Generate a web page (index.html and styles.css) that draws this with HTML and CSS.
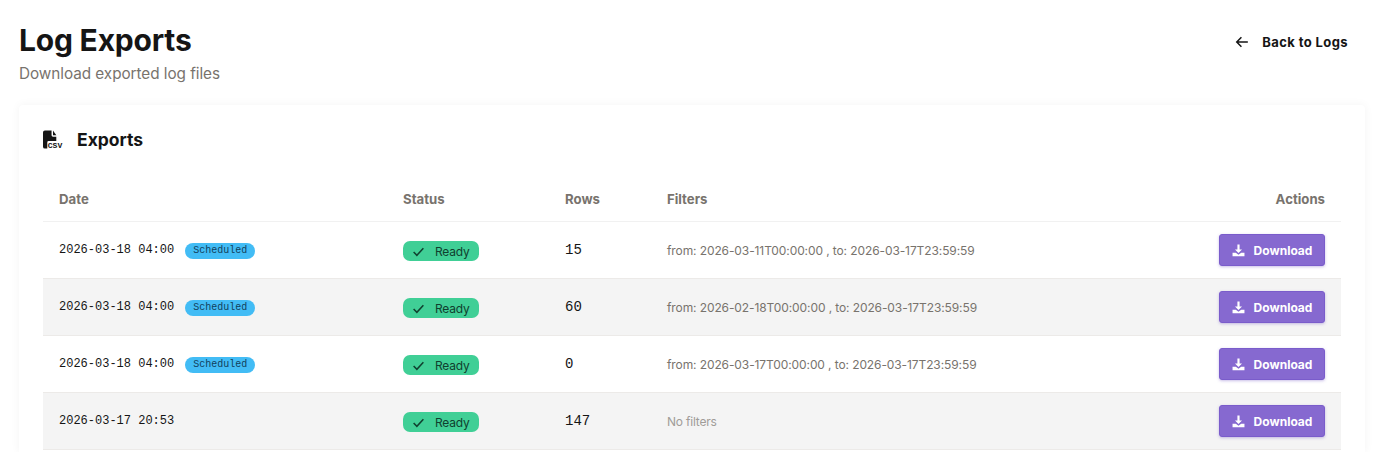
FILE: index.html
```html
<!DOCTYPE html>
<html lang="en">
<head>
<meta charset="utf-8">
<title>Log Exports</title>
<link rel="stylesheet" href="styles.css">
</head>
<body>
<div class="page">
  <header class="head">
    <div>
      <h1 class="title">Log Exports</h1>
      <p class="sub">Download exported log files</p>
    </div>
    <a class="back" href="#">
      <svg class="back-icon" viewBox="0 0 24 24"><path d="M22 12H3.500M11 4l-8 8 8 8"/></svg>
      <span>Back to Logs</span>
    </a>
  </header>
  <section class="card">
    <div class="card-head">
      <svg class="csv" viewBox="0 0 20 20"><path d="M0 2a2 2 0 0 1 2-2h7v5a1.500 1.500 0 0 0 1.500 1.500H14V11H6a1.500 1.500 0 0 0-1.500 1.500V19H2a2 2 0 0 1-2-2z"/><path d="M10.500 0l3.500 5h-3.500z"/><text x="5" y="18.800" class="csv-text">CSV</text></svg>
      <h2 class="card-title">Exports</h2>
    </div>
    <table class="table">
      <thead>
        <tr><th class="c-date">Date</th><th class="c-status">Status</th><th class="c-rows">Rows</th><th>Filters</th><th class="c-act">Actions</th></tr>
      </thead>
      <tbody>
        <tr>
          <td class="mono"><span class="date">2026-03-18 04:00</span><span class="sched">Scheduled</span></td>
          <td><span class="ready"><svg class="check" viewBox="0 0 24 24"><path d="M3 13l6 6L21 6"/></svg>Ready</span></td>
          <td class="rows">15</td>
          <td class="filters">from: 2026-03-11T00:00:00 , to: 2026-03-17T23:59:59</td>
          <td class="act"><button class="dl"><svg class="dl-icon" viewBox="0 0 24 24"><path d="M10 1h4v9h4.500L12 16.500 5.500 10H10z"/><path d="M1 16h6l5 4 5-4h6v6.500H1z"/></svg>Download</button></td>
        </tr>
        <tr>
          <td class="mono"><span class="date">2026-03-18 04:00</span><span class="sched">Scheduled</span></td>
          <td><span class="ready"><svg class="check" viewBox="0 0 24 24"><path d="M3 13l6 6L21 6"/></svg>Ready</span></td>
          <td class="rows">60</td>
          <td class="filters">from: 2026-02-18T00:00:00 , to: 2026-03-17T23:59:59</td>
          <td class="act"><button class="dl"><svg class="dl-icon" viewBox="0 0 24 24"><path d="M10 1h4v9h4.500L12 16.500 5.500 10H10z"/><path d="M1 16h6l5 4 5-4h6v6.500H1z"/></svg>Download</button></td>
        </tr>
        <tr>
          <td class="mono"><span class="date">2026-03-18 04:00</span><span class="sched">Scheduled</span></td>
          <td><span class="ready"><svg class="check" viewBox="0 0 24 24"><path d="M3 13l6 6L21 6"/></svg>Ready</span></td>
          <td class="rows">0</td>
          <td class="filters">from: 2026-03-17T00:00:00 , to: 2026-03-17T23:59:59</td>
          <td class="act"><button class="dl"><svg class="dl-icon" viewBox="0 0 24 24"><path d="M10 1h4v9h4.500L12 16.500 5.500 10H10z"/><path d="M1 16h6l5 4 5-4h6v6.500H1z"/></svg>Download</button></td>
        </tr>
        <tr>
          <td class="mono plain"><span class="date">2026-03-17 20:53</span></td>
          <td><span class="ready"><svg class="check" viewBox="0 0 24 24"><path d="M3 13l6 6L21 6"/></svg>Ready</span></td>
          <td class="rows">147</td>
          <td class="filters none">No filters</td>
          <td class="act"><button class="dl"><svg class="dl-icon" viewBox="0 0 24 24"><path d="M10 1h4v9h4.500L12 16.500 5.500 10H10z"/><path d="M1 16h6l5 4 5-4h6v6.500H1z"/></svg>Download</button></td>
        </tr>
      </tbody>
    </table>
  </section>
</div>
</body>
</html>
```
FILE: styles.css
```css
* { box-sizing: border-box; }
html, body { margin: 0; height: 452px; overflow: hidden; background: #fff; }
body { font-family: Inter, "Liberation Sans", sans-serif; color: #151515; }
.page { padding: 20px 30px 0 19px; }
.head { display: flex; justify-content: space-between; align-items: flex-start; height: 85px; }
.title { margin: 0; font-size: 30px; line-height: 40px; font-weight: 700; letter-spacing: -0.2px; }
.sub { margin: 4px 0 0; font-size: 15.300px; line-height: 20px; color: #78736d; letter-spacing: -0.05px; }
.back { display: flex; align-items: center; gap: 13px; height: 43px; padding-right: 17px; color: #151515; text-decoration: none; font-size: 13px; font-weight: 700; letter-spacing: 0.4px; }
.back-icon { width: 14px; height: 14px; fill: none; stroke: #151515; stroke-width: 2.600; }
.card { background: #fff; padding: 0 24px; height: 347px; box-shadow: 0 0 10px rgba(0, 0, 0, 0.05); border-radius: 4px 4px 0 0; }
.card-head { display: flex; align-items: center; gap: 15px; height: 72px; padding-bottom: 3px; }
.csv { width: 19px; height: 20px; fill: #151515; overflow: visible; }
.csv-text { font-family: "Liberation Mono", monospace; font-size: 8.500px; font-weight: 700; }
.card-title { margin: 0; font-size: 17.500px; font-weight: 700; }
.table { width: 100%; border-collapse: collapse; table-layout: fixed; }
th { height: 44px; padding: 0 16px; text-align: left; font-size: 13.200px; font-weight: 700; color: #78736d; border-bottom: 1px solid #f1f1f1; }
.c-date { width: 344px; }
.c-status { width: 162px; }
.c-rows { width: 102px; }
.c-act { width: 200px; text-align: right; }
td { height: 57px; padding: 0 16px; border-bottom: 1px solid #eceae8; font-size: 13px; }
tbody tr:nth-child(even) { background: #f4f4f4; }
.mono { white-space: nowrap; }
.plain { padding-bottom: 2px; }
.date { font-family: "Liberation Mono", monospace; font-size: 12px; }
.sched { display: inline-block; margin-left: 11px; padding: 0 8px; height: 16px; line-height: 15px; border-radius: 8px; background: #42bcf5; color: #123f5c; font-family: "Liberation Mono", monospace; font-size: 10px; vertical-align: 0; }
.ready { display: inline-flex; align-items: center; gap: 10px; width: 76px; height: 20px; margin-top: 3px; padding-left: 9px; border-radius: 7px; background: #40cf96; color: #10402f; font-size: 12px; letter-spacing: -0.2px; }
.check { width: 13px; height: 13px; fill: none; stroke: #10402f; stroke-width: 2.800; }
.rows { font-family: "Liberation Mono", monospace; font-size: 14px; }
.filters { font-size: 12px; color: #78736d; white-space: nowrap; letter-spacing: -0.1px; padding-top: 2px; }
.none { color: #a09c98; letter-spacing: -0.2px; }
.act { text-align: right; }
.dl { display: inline-flex; align-items: center; justify-content: center; gap: 9px; width: 106px; height: 32px; padding: 2px 0 0; border: 1px solid #7a5ccb; border-radius: 3px; background: #8669d0; color: #fff; font-family: Inter, "Liberation Sans", sans-serif; font-size: 12px; font-weight: 700; box-shadow: 0 1px 3px rgba(100, 70, 190, 0.35); }
.dl-icon { width: 13px; height: 13px; fill: #fff; }
```
